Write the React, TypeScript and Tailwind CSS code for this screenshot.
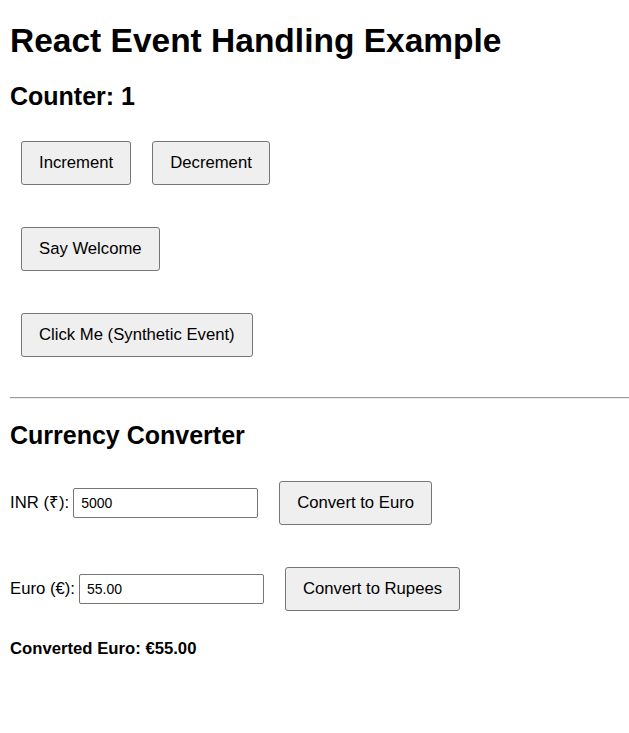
import { useState } from "react";

const btn =
  "h-[44px] px-[17px] bg-[#efefef] border border-[#767676] rounded-[3px] text-[16.7px] text-black hover:bg-[#e5e5e5]";
const inp =
  "h-[30px] w-[185px] pl-[7px] pr-[3px] border border-[#767676] rounded-[2px] text-[14px] text-black bg-white outline-none";

const App = () => {
  const [count, setCount] = useState(1);
  const [inr, setInr] = useState("5000");
  const [euro, setEuro] = useState("55.00");
  const [converted, setConverted] = useState("€55.00");

  return (
    <div className="min-h-[733px] bg-white pl-[10px] font-['Liberation_Sans',Arial,sans-serif] text-black">
      <h1 className="pt-[22px] text-[33.5px] font-bold leading-[38px]">React Event Handling Example</h1>
      <h2 className="mt-[22px] text-[25px] font-bold leading-[29px]">Counter: {count}</h2>

      <div className="mt-[30px] flex gap-[21px] pl-[11px]">
        <button className={btn} onClick={() => setCount(count + 1)}>
          Increment
        </button>
        <button className={btn} onClick={() => setCount(count - 1)}>
          Decrement
        </button>
      </div>

      <div className="mt-[42px] flex pl-[11px]">
        <button className={btn} onClick={() => alert("Welcome!")}>
          Say Welcome
        </button>
      </div>

      <div className="mt-[42px] flex pl-[11px]">
        <button className={btn} onClick={(e) => console.log(e)}>
          Click Me (Synthetic Event)
        </button>
      </div>

      <hr className="mt-[40px] border-0 border-t border-b border-t-[#9a9a9a] border-b-[#eeeeee]" />

      <h2 className="mt-[22px] text-[25px] font-bold leading-[29px]">Currency Converter</h2>

      <div className="mt-[31px] flex items-center">
        <span className="text-[16.7px]">INR (₹):</span>
        <input className={`${inp} ml-[4px]`} value={inr} onChange={(e) => setInr(e.target.value)} />
        <button
          className={`${btn} ml-[21px]`}
          onClick={() => {
            const v = (parseFloat(inr || "0") * 0.011).toFixed(2);
            setEuro(v);
            setConverted(`€${v}`);
          }}
        >
          Convert to Euro
        </button>
      </div>

      <div className="mt-[42px] flex items-center">
        <span className="text-[16.7px]">Euro (€):</span>
        <input className={`${inp} ml-[4px]`} value={euro} onChange={(e) => setEuro(e.target.value)} />
        <button
          className={`${btn} ml-[21px]`}
          onClick={() => setInr((parseFloat(euro || "0") / 0.011).toFixed(2))}
        >
          Convert to Rupees
        </button>
      </div>

      <p className="mt-[28px] text-[16.7px] font-bold leading-[19px]">Converted Euro: {converted}</p>
    </div>
  );
};

export default App;
